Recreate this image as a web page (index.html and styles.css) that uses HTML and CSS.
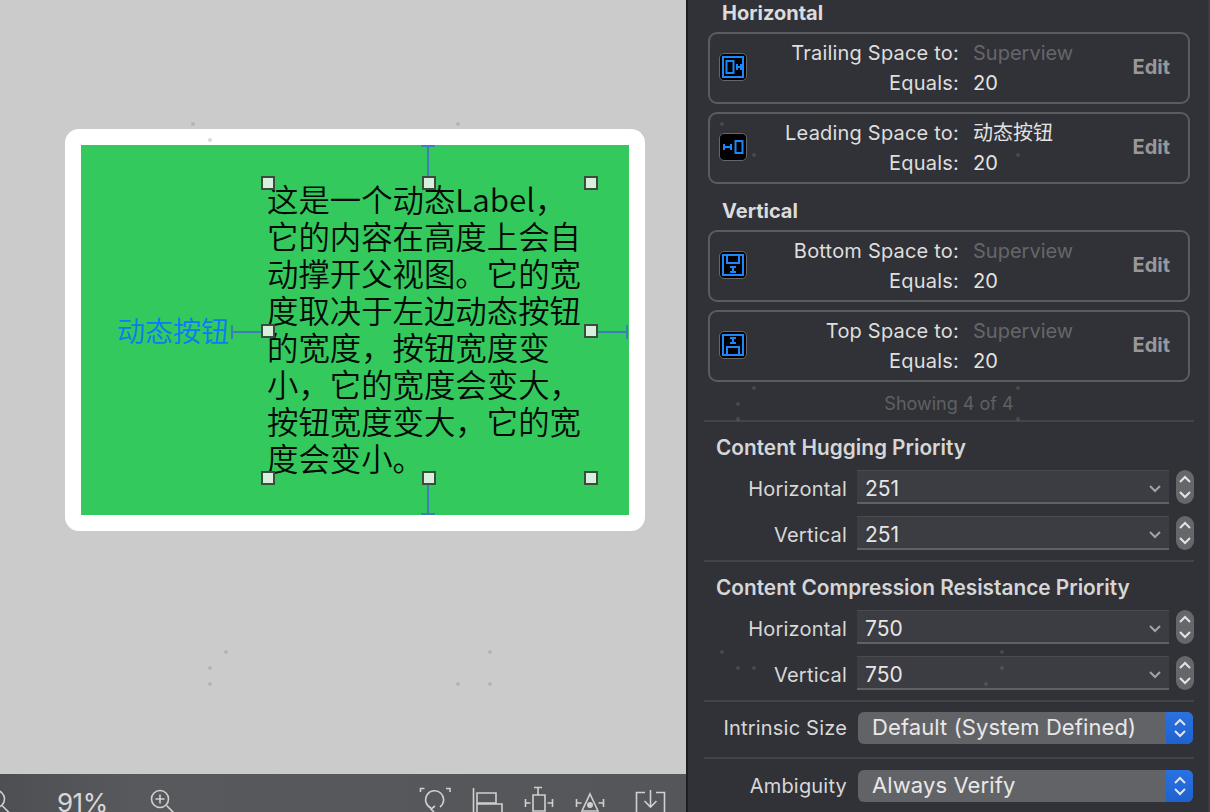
FILE: index.html
```html
<!DOCTYPE html>
<html lang="en">
<head>
    <meta charset="UTF-8">
    <title>Size Inspector</title>
    <link rel="stylesheet" href="styles.css">
</head>
<body>
    <div class="editor">
        <div class="canvas">
            <div class="device">
                <div class="screen">
                    <span class="dyn-button">动态按钮</span>
                    <div class="label-box">
                        <p class="dyn-label">这是一个动态Label，<br>它的内容在高度上会自<br>动撑开父视图。它的宽<br>度取决于左边动态按钮<br>的宽度，按钮宽度变<br>小，它的宽度会变大，<br>按钮宽度变大，它的宽<br>度会变小。</p>
                        <i class="handle h-tl"></i><i class="handle h-tc"></i><i class="handle h-tr"></i>
                        <i class="handle h-ml"></i><i class="handle h-mr"></i>
                        <i class="handle h-bl"></i><i class="handle h-bc"></i><i class="handle h-br"></i>
                        <i class="line line-top"></i><i class="line line-bottom"></i>
                        <i class="line line-left"></i><i class="line line-right"></i>
                    </div>
                </div>
            </div>
        </div>
        <div class="toolbar">
            <svg class="tool-icon zoom-out" width="24" height="28" viewBox="0 0 24 28"><circle cx="-4" cy="13" r="8.500"/><path d="M2 19.500l8 8"/></svg>
            <span class="zoom-value">91%</span>
            <svg class="tool-icon zoom-in" width="28" height="28" viewBox="0 0 28 28"><circle cx="10" cy="13" r="8.500"/><path d="M10 8.500v9M5.500 13h9M16.500 19.500l8 8"/></svg>
            <div class="tool-group">
                <svg class="tool-icon" width="32" height="28" viewBox="0 0 32 28"><path d="M1.500 6V2.500h4M31 6V2.500h-4M12 22a9 9 0 1 1 9-1M16 20l-4 3 3 3"/></svg>
                <svg class="tool-icon" width="31" height="28" viewBox="0 0 31 28"><path d="M1.500 2v26M5 7h19v10H5zM5 18h25v12H5z"/></svg>
                <svg class="tool-icon" width="30" height="28" viewBox="0 0 30 28"><path d="M10 1.500h8M14 1.500v7M9 9h12v16H9zM1.500 13v8M1.500 17h5M28.500 13v8M28.500 17h-5"/></svg>
                <svg class="tool-icon" width="30" height="28" viewBox="0 0 30 28"><path d="M1.500 13v8M1.500 17h5M28.500 13v8M28.500 17h-5M15 8l8 17H7z"/><circle class="solid" cx="15" cy="19" r="3"/></svg>
                <svg class="tool-icon tool-last" width="31" height="28" viewBox="0 0 31 28"><path d="M10 6.500H1.500V30h28V6.500H21M15.500 4v16M9.500 15l6 6 6-6"/></svg>
            </div>
        </div>
    </div>

    <aside class="inspector">
        <h2 class="group-title">Horizontal</h2>
        <div class="constraint">
            <span class="c-icon"><svg width="26" height="26" viewBox="0 0 26 26"><path d="M3 3h20v20H3zM6.500 7h7v12h-7zM17 10v6M21 10v6M17 13h4"/></svg></span>
            <div class="c-grid">
                <span class="c-key">Trailing Space to:</span><span class="c-val dim">Superview</span>
                <span class="c-key">Equals:</span><span class="c-val">20</span>
            </div>
            <button class="edit">Edit</button>
        </div>
        <div class="constraint">
            <span class="c-icon"><svg width="26" height="26" viewBox="0 0 26 26"><path d="M4 10v6M11 10v6M4 13h7M15.500 7h7v12h-7z"/></svg></span>
            <div class="c-grid">
                <span class="c-key">Leading Space to:</span><span class="c-val">动态按钮</span>
                <span class="c-key">Equals:</span><span class="c-val">20</span>
            </div>
            <button class="edit">Edit</button>
        </div>

        <h2 class="group-title vertical">Vertical</h2>
        <div class="constraint">
            <span class="c-icon"><svg width="26" height="26" viewBox="0 0 26 26"><path d="M3 3h20v20H3zM7 3v8h12V3M10 15h6M10 20h6M13 15v5"/></svg></span>
            <div class="c-grid">
                <span class="c-key">Bottom Space to:</span><span class="c-val dim">Superview</span>
                <span class="c-key">Equals:</span><span class="c-val">20</span>
            </div>
            <button class="edit">Edit</button>
        </div>
        <div class="constraint">
            <span class="c-icon"><svg width="26" height="26" viewBox="0 0 26 26"><path d="M3 3h20v20H3zM7 23v-8h12v8M10 6h6M10 11h6M13 6v5"/></svg></span>
            <div class="c-grid">
                <span class="c-key">Top Space to:</span><span class="c-val dim">Superview</span>
                <span class="c-key">Equals:</span><span class="c-val">20</span>
            </div>
            <button class="edit">Edit</button>
        </div>
        <p class="showing">Showing 4 of 4</p>
        <hr class="sep sep-first">

        <h3 class="priority-title">Content Hugging Priority</h3>
        <div class="priority-row">
            <span class="row-label">Horizontal</span>
            <div class="combo">251<svg class="chev" width="12" height="8" viewBox="0 0 12 8"><path d="M1 1l5 5 5-5"/></svg></div>
            <div class="stepper"><svg width="14" height="26" viewBox="0 0 14 26"><path d="M2 8l5-5 5 5M2 18l5 5 5-5"/></svg></div>
        </div>
        <div class="priority-row">
            <span class="row-label">Vertical</span>
            <div class="combo">251<svg class="chev" width="12" height="8" viewBox="0 0 12 8"><path d="M1 1l5 5 5-5"/></svg></div>
            <div class="stepper"><svg width="14" height="26" viewBox="0 0 14 26"><path d="M2 8l5-5 5 5M2 18l5 5 5-5"/></svg></div>
        </div>
        <hr class="sep">

        <h3 class="priority-title">Content Compression Resistance Priority</h3>
        <div class="priority-row">
            <span class="row-label">Horizontal</span>
            <div class="combo">750<svg class="chev" width="12" height="8" viewBox="0 0 12 8"><path d="M1 1l5 5 5-5"/></svg></div>
            <div class="stepper"><svg width="14" height="26" viewBox="0 0 14 26"><path d="M2 8l5-5 5 5M2 18l5 5 5-5"/></svg></div>
        </div>
        <div class="priority-row">
            <span class="row-label">Vertical</span>
            <div class="combo">750<svg class="chev" width="12" height="8" viewBox="0 0 12 8"><path d="M1 1l5 5 5-5"/></svg></div>
            <div class="stepper"><svg width="14" height="26" viewBox="0 0 14 26"><path d="M2 8l5-5 5 5M2 18l5 5 5-5"/></svg></div>
        </div>
        <hr class="sep">

        <div class="popup-row">
            <span class="row-label">Intrinsic Size</span>
            <div class="popup">Default (System Defined)<span class="popup-arrows"><svg width="14" height="22" viewBox="0 0 14 22"><path d="M2 8l5-5 5 5M2 14l5 5 5-5"/></svg></span></div>
        </div>
        <hr class="sep sep-tight">
        <div class="popup-row">
            <span class="row-label">Ambiguity</span>
            <div class="popup">Always Verify<span class="popup-arrows"><svg width="14" height="22" viewBox="0 0 14 22"><path d="M2 8l5-5 5 5M2 14l5 5 5-5"/></svg></span></div>
        </div>
    </aside>

    <svg class="specks" width="1210" height="812" viewBox="0 0 1210 812">
        <circle cx="193" cy="124" r="2"/><circle cx="210" cy="140" r="2"/><circle cx="458" cy="124" r="2"/>
        <circle cx="226" cy="652" r="2"/><circle cx="490" cy="652" r="2"/><circle cx="210" cy="668" r="2"/>
        <circle cx="210" cy="684" r="2"/><circle cx="458" cy="684" r="2"/><circle cx="490" cy="684" r="2"/>
        <circle cx="722" cy="124" r="2"/><circle cx="754" cy="155" r="2"/><circle cx="1018" cy="155" r="2"/>
        <circle cx="754" cy="388" r="2"/><circle cx="1018" cy="388" r="2"/><circle cx="738" cy="404" r="2"/>
        <circle cx="738" cy="419" r="2"/><circle cx="1018" cy="419" r="2"/><circle cx="722" cy="652" r="2"/>
        <circle cx="1002" cy="652" r="2"/><circle cx="738" cy="668" r="2"/><circle cx="754" cy="668" r="2"/>
        <circle cx="1002" cy="668" r="2"/><circle cx="986" cy="684" r="2"/>
    </svg>
</body>
</html>
```

FILE: styles.css
```css
html, body {
    margin: 0;
    height: 100%;
}
body {
    width: 1210px;
    height: 812px;
    overflow: hidden;
    display: flex;
    position: relative;
    font-family: Inter, "Noto Sans CJK SC", sans-serif;
    background: #313237;
}
.editor {
    width: 686px;
    height: 812px;
    display: flex;
    flex-direction: column;
    flex: none;
}
.canvas {
    height: 774px;
    background: #cbcbcb;
    padding: 129px 0 0 65px;
    box-sizing: border-box;
}
.device {
    width: 580px;
    height: 402px;
    background: #fff;
    border-radius: 14px;
    padding: 16px;
    box-sizing: border-box;
}
.screen {
    height: 370px;
    background: #34c95c;
    display: flex;
    font-family: "Noto Sans CJK SC", sans-serif;
    font-weight: 350;
}
.dyn-button {
    margin: 168px 0 0 36px;
    width: 151px;
    font-size: 28px;
    line-height: 34px;
    color: #0a7bf5;
    white-space: nowrap;
}
.label-box {
    position: relative;
    width: 323px;
    height: 295px;
    margin-top: 38px;
}
.dyn-label {
    margin: -3px 0 0 -1px;
    font-size: 31.400px;
    line-height: 37px;
    color: #030a05;
    white-space: nowrap;
}
.handle {
    position: absolute;
    width: 10px;
    height: 10px;
    background: #d6f0dc;
    border: 2px solid #3d4a40;
    margin: -7px 0 0 -7px;
    z-index: 2;
}
.h-tl { left: 0; top: 0; }
.h-tc { left: 161px; top: 0; }
.h-tr { left: 323px; top: 0; }
.h-ml { left: 0; top: 148px; }
.h-mr { left: 323px; top: 148px; }
.h-bl { left: 0; top: 295px; }
.h-bc { left: 161px; top: 295px; }
.h-br { left: 323px; top: 295px; }
.line {
    position: absolute;
    background: #3b7fb5;
}
.line-top, .line-bottom {
    left: 159px;
    width: 2px;
    height: 37px;
}
.line-top { top: -38px; }
.line-bottom { top: 295px; }
.line-left, .line-right {
    top: 148px;
    height: 2px;
}
.line-left { left: -37px; width: 37px; }
.line-right { left: 323px; width: 37px; }
.line-top::after, .line-bottom::after {
    content: "";
    position: absolute;
    left: -6px;
    width: 14px;
    height: 2px;
    background: #3b7fb5;
}
.line-top::after { top: 0; }
.line-bottom::after { bottom: 0; }
.line-left::after, .line-right::after {
    content: "";
    position: absolute;
    top: -6px;
    width: 2px;
    height: 14px;
    background: #3b7fb5;
}
.line-left::after { left: 0; }
.line-right::after { right: 0; }
.toolbar {
    height: 38px;
    background: linear-gradient(90deg, #4e4f53, #58595d 20%, #55565a);
    display: flex;
    align-items: flex-start;
    overflow: hidden;
    color: #d8d8d8;
}
.tool-icon {
    flex: none;
    fill: none;
    stroke: #d0d0d0;
    stroke-width: 1.600;
}
.tool-icon .solid {
    fill: #d0d0d0;
    stroke: none;
}
.zoom-out {
    margin-top: 12px;
}
.zoom-value {
    margin: 13px 0 0 33px;
    font-size: 26px;
    line-height: 32px;
    width: 93px;
    flex: none;
    letter-spacing: -0.500px;
}
.zoom-in {
    margin-top: 12px;
}
.tool-group {
    margin: 12px 0 0 241px;
    display: flex;
    gap: 21px;
    align-items: flex-start;
}
.tool-last {
    margin-left: 9px;
}
.inspector {
    width: 522px;
    height: 812px;
    flex: none;
    margin-left: 2px;
    border-right: 2px solid #3b3c41;
    box-sizing: border-box;
    padding: 1px 19px 0 21px;
    color: #e3e3e3;
    font-size: 20px;
}
body::before {
    content: "";
    position: absolute;
    left: 686px;
    top: 0;
    width: 2px;
    height: 812px;
    background: #1d1e21;
}
.group-title {
    margin: 0 0 6px 13px;
    font-size: 20px;
    line-height: 25px;
    font-weight: 700;
    color: #dcdcdc;
}
.group-title.vertical {
    margin-top: 15px;
    margin-bottom: 6px;
}
.constraint {
    height: 72px;
    box-sizing: border-box;
    border: 2px solid #5b5c60;
    border-radius: 9px;
    margin: 0 -1px 8px;
    display: flex;
    align-items: center;
    padding-left: 9px;
}
.c-icon {
    width: 26px;
    height: 26px;
    background: #000;
    border: 1px solid #66676b;
    border-radius: 5px;
    flex: none;
    margin-top: -2px;
}
.c-icon svg {
    display: block;
    fill: none;
    stroke: #1c86fb;
    stroke-width: 2;
}
.c-grid {
    width: 355px;
    flex: none;
    display: grid;
    grid-template-columns: 212px 1fr;
    column-gap: 14px;
    line-height: 30px;
    margin-top: -1px;
}
.c-key {
    text-align: right;
    color: #dedede;
    letter-spacing: 0.200px;
}
.c-val.dim {
    color: #65666a;
}
.edit {
    margin: -3px 18px 0 auto;
    padding: 0;
    background: none;
    border: 0;
    font-family: Inter, sans-serif;
    font-size: 20px;
    font-weight: 700;
    color: #98989b;
}
.showing {
    margin: 11px 0 0;
    text-align: center;
    font-size: 18px;
    line-height: 22px;
    color: #5f6064;
}
.sep {
    margin: 10px -5px 0;
    border: 0;
    height: 2px;
    background: #434448;
}
.sep-first {
    margin-top: 5px;
}
.sep-tight {
    margin-top: 13px;
    margin-bottom: 11px;
}
.priority-title {
    margin: 13px 0 10px 7px;
    font-size: 20.800px;
    line-height: 25px;
    font-weight: 600;
    color: #d6d6d6;
}
.priority-row {
    display: flex;
    height: 34px;
    align-items: center;
}
.priority-row + .priority-row {
    margin-top: 12px;
}
.priority-row .row-label {
    margin-top: 4px;
}
.row-label {
    width: 138px;
    flex: none;
    text-align: right;
    color: #d8d8d8;
    letter-spacing: 0.200px;
}
.combo {
    margin-left: 10px;
    width: 312px;
    height: 34px;
    flex: none;
    box-sizing: border-box;
    background: #3c3d42;
    border-top: 1px solid #4a4b4f;
    border-bottom: 2px solid #606165;
    padding: 4px 0 0 8px;
    font-size: 21px;
    line-height: 28px;
    color: #e6e6e6;
    display: flex;
    justify-content: space-between;
    align-items: center;
}
.chev {
    margin-right: 8px;
    fill: none;
    stroke: #a3a3a6;
    stroke-width: 2;
}
.stepper {
    margin-left: 7px;
    width: 18px;
    height: 34px;
    flex: none;
    background: #66676b;
    border-radius: 9px;
    display: flex;
    justify-content: center;
    align-items: center;
}
.stepper svg, .popup-arrows svg {
    fill: none;
    stroke: #e4e4e4;
    stroke-width: 2;
}
.popup-row {
    display: flex;
    align-items: center;
    height: 32px;
}
.sep + .popup-row {
    margin-top: 10px;
}
.popup {
    margin-left: 11px;
    width: 335px;
    height: 32px;
    flex: none;
    box-sizing: border-box;
    border-radius: 6px;
    background: #626367;
    padding-left: 14px;
    font-size: 22px;
    letter-spacing: 0.100px;
    line-height: 31px;
    color: #e8e8e8;
    display: flex;
    justify-content: space-between;
    overflow: hidden;
}
.popup-arrows {
    width: 27px;
    background: linear-gradient(#2a72e0, #1d62cf);
    display: flex;
    justify-content: center;
    align-items: center;
}
.specks {
    position: absolute;
    left: 0;
    top: 0;
    pointer-events: none;
    fill: rgba(128, 128, 128, 0.3);
}
```
